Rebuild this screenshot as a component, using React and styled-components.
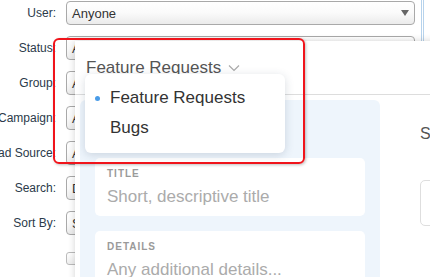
import styled, { createGlobalStyle } from "styled-components"

const GlobalStyle = createGlobalStyle`
  html, body {
    margin: 0;
    padding: 0;
    background: #fff;
    overflow: hidden;
  }
  body {
    font-family: "Liberation Sans", Arial, sans-serif;
  }
`

const Page = styled.div`
  position: relative;
  width: 430px;
  height: 277px;
  overflow: hidden;
  display: flex;
  background: #fff;
`

const Form = styled.div`
  width: 415px;
  flex: none;
  display: flex;
  flex-direction: column;
  gap: 11px;
  padding-top: 1px;
`

const Row = styled.div`
  display: grid;
  grid-template-columns: 56px 1fr;
  column-gap: 10px;
  align-items: center;
  height: 24px;
`

const Label = styled.div`
  display: flex;
  justify-content: flex-end;
  white-space: nowrap;
  font-size: 12px;
  color: #2b3a4a;
`

const Select = styled.div`
  position: relative;
  height: 24px;
  box-sizing: border-box;
  border: 1px solid #a9a9a9;
  border-radius: 4px;
  background: linear-gradient(#ffffff, #fafafa 50%, #ebebeb);
  display: flex;
  align-items: center;
  padding-left: 5px;
  font-size: 13px;
  color: #333;
`

const Arrow = styled.span`
  margin-left: auto;
  margin-right: 5px;
  width: 0;
  height: 0;
  border-left: 4px solid transparent;
  border-right: 4px solid transparent;
  border-top: 6px solid #666;
`

const Check = styled.div`
  width: 13px;
  height: 13px;
  box-sizing: border-box;
  border: 1px solid #bbb;
  border-radius: 3px;
  background: linear-gradient(#fff, #eee);
`

const Frame = styled.div`
  width: 1px;
  margin-left: 6px;
  height: 42px;
  border-left: 1px solid #b7d3ec;
  border-right: 1px solid #b7d3ec;
`

const Modal = styled.div`
  position: absolute;
  left: 75px;
  top: 41px;
  width: 640px;
  height: 260px;
  background: #fff;
  box-shadow: 0 0 7px rgba(0, 0, 0, 0.18);
  display: flex;
  flex-direction: column;
`

const Header = styled.div`
  height: 53px;
  flex: none;
  border-bottom: 1px solid #dddddd;
  display: flex;
  align-items: center;
  gap: 7px;
  padding-left: 11px;
  font-size: 17px;
  color: #555;
`

const Body = styled.div`
  display: flex;
  padding: 5px 0 0 5px;
  flex: 1;
`

const Panel = styled.div`
  flex: none;
  width: 300px;
  box-sizing: border-box;
  background: #eef5fc;
  border-radius: 6px 6px 0 0;
  padding: 58px 15px 0;
  display: flex;
  flex-direction: column;
  gap: 15px;
`

const Card = styled.div`
  background: #fff;
  border-radius: 5px;
  padding: 10px 12px;
  display: flex;
  flex-direction: column;
  gap: 8px;
`

const FieldLabel = styled.div`
  font-size: 10px;
  line-height: 12px;
  font-weight: bold;
  letter-spacing: 1px;
  color: #9a9a9a;
`

const Placeholder = styled.div`
  font-size: 17px;
  line-height: 18px;
  color: #ababab;
  white-space: nowrap;
`

const Side = styled.div`
  flex: none;
  margin-left: 40px;
  padding-top: 25px;
  display: flex;
  flex-direction: column;
  gap: 37px;
`

const SideTitle = styled.div`
  font-size: 16px;
  line-height: 18px;
  color: #555;
  white-space: nowrap;
`

const SideBox = styled.div`
  width: 200px;
  height: 44px;
  border: 1px solid #dedede;
  border-radius: 5px;
`

const Menu = styled.div`
  position: absolute;
  left: 10px;
  top: 33px;
  width: 200px;
  height: 79px;
  box-sizing: border-box;
  background: #fff;
  border-radius: 6px;
  box-shadow: 0 2px 10px rgba(40, 60, 90, 0.18);
  padding: 9px 0 0;
`

const Item = styled.div`
  display: flex;
  align-items: center;
  gap: 10px;
  height: 30px;
  padding-left: 10px;
  font-size: 17px;
  color: #333;
`

const Dot = styled.span`
  width: 5px;
  height: 5px;
  border-radius: 50%;
  background: ${(p) => (p.$on ? "#4a9ce8" : "transparent")};
`

const Highlight = styled.div`
  position: absolute;
  left: 53px;
  top: 38px;
  width: 252px;
  height: 126px;
  box-sizing: border-box;
  border: 2px solid #f0141b;
  border-radius: 6px;
  box-shadow: 1px 1px 3px rgba(0, 0, 0, 0.25);
  z-index: 5;
`

const rows = [
  ["User:", "Anyone"],
  ["Status:", "Any"],
  ["Group:", "Any"],
  ["Campaign:", "Any"],
  ["Lead Source:", "Any"],
  ["Search:", "Default"],
  ["Sort By:", "Score"],
]

function App() {
  return (
    <>
      <GlobalStyle />
      <Page>
        <Form>
          {rows.map(([label, value]) => (
            <Row key={label}>
              <Label>{label}</Label>
              <Select>
                {value}
                <Arrow />
              </Select>
            </Row>
          ))}
          <Row>
            <span />
            <Check />
          </Row>
        </Form>
        <Frame />
        <Modal>
          <Header>
            Feature Requests
            <svg width="12" height="8" viewBox="0 0 12 8" fill="none">
              <path d="M1 1.5 L6 6.5 L11 1.5" stroke="#aaa" strokeWidth="1.2" />
            </svg>
          </Header>
          <Body>
            <Panel>
              <Card>
                <FieldLabel>TITLE</FieldLabel>
                <Placeholder>Short, descriptive title</Placeholder>
              </Card>
              <Card>
                <FieldLabel>DETAILS</FieldLabel>
                <Placeholder>Any additional details...</Placeholder>
              </Card>
            </Panel>
            <Side>
              <SideTitle>Status</SideTitle>
              <SideBox />
            </Side>
          </Body>
          <Menu>
            <Item><Dot $on />Feature Requests</Item>
            <Item><Dot />Bugs</Item>
          </Menu>
        </Modal>
        <Highlight />
      </Page>
    </>
  )
}

export default App
